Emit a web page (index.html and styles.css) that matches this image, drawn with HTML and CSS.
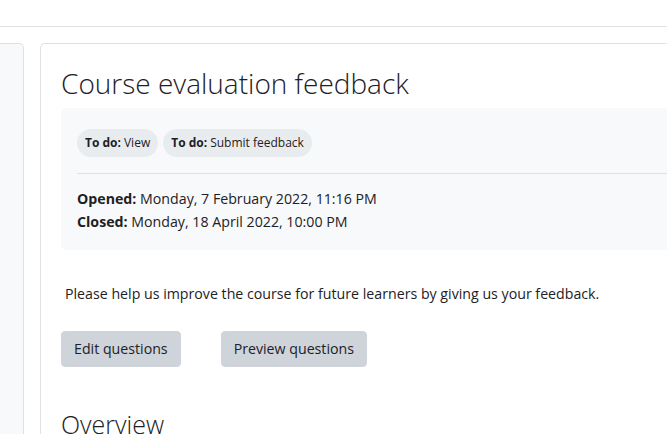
FILE: index.html
```html
<!DOCTYPE html>
<html lang="en">
<head>
<meta charset="utf-8">
<title>Course evaluation feedback</title>
<link rel="stylesheet" href="styles.css">
</head>
<body>
<header class="topbar"></header>
<div class="page">
  <aside class="drawer"></aside>
  <main class="card">
    <h2 class="title">Course evaluation feedback</h2>
    <div class="activity-info">
      <div class="badges">
        <span class="badge"><strong>To do:</strong> View</span>
        <span class="badge"><strong>To do:</strong> Submit feedback</span>
      </div>
      <hr class="divider">
      <div class="dates">
        <div><strong>Opened:</strong> Monday, 7 February 2022, 11:16 PM</div>
        <div><strong>Closed:</strong> Monday, 18 April 2022, 10:00 PM</div>
      </div>
    </div>
    <p class="intro">Please help us improve the course for future learners by giving us your feedback.</p>
    <div class="actions">
      <button class="btn" type="button">Edit questions</button>
      <button class="btn" type="button">Preview questions</button>
    </div>
    <h3 class="subtitle">Overview</h3>
  </main>
</div>
</body>
</html>
```

FILE: styles.css
```css
html, body {
  margin: 0;
  padding: 0;
  background: #fff;
  overflow: hidden;
  height: 434px;
}

body {
  font-family: "Open Sans", "Noto Sans", sans-serif;
  font-size: 14.2px;
  line-height: 22.5px;
  color: #1d2125;
}

.topbar {
  height: 26px;
  border-bottom: 1px solid #dee2e6;
}

.page {
  display: flex;
  gap: 16px;
  padding-top: 16px;
  height: 391px;
  overflow: hidden;
}

.drawer {
  flex: none;
  width: 23px;
  background: #f8f9fa;
  border: 1px solid #dee2e6;
  border-left: none;
  border-bottom: none;
  border-radius: 0 5px 0 0;
}

.card {
  flex: none;
  width: 640px;
  border: 1px solid #dee2e6;
  border-right: none;
  border-bottom: none;
  border-radius: 5px 0 0 0;
  padding: 20px 0 0 20px;
  box-sizing: border-box;
  overflow: hidden;
}

.title {
  margin: 1px 0 7px;
  font-size: 28px;
  font-weight: 300;
  line-height: 36px;
  white-space: nowrap;
}

.activity-info {
  background: #f8f9fa;
  border-radius: 5px 0 0 5px;
  padding: 21px 0 17px 16px;
}

.badges {
  display: flex;
  gap: 5px;
}

.badge {
  display: inline-flex;
  align-items: center;
  height: 28px;
  padding: 0 8px;
  border-radius: 14px;
  background: #e9ecef;
  font-size: 12px;
  line-height: 1;
  color: #1d2125;
}

.badge strong {
  font-weight: 700;
  margin-right: 3px;
}

.divider {
  margin: 16px 0 14px;
  border: none;
  border-top: 1px solid #dee2e6;
}

.dates strong {
  font-weight: 700;
}

.intro {
  margin: 33px 0 25px;
  padding-left: 4px;
  white-space: nowrap;
}

.actions {
  display: flex;
  gap: 40px;
}

.btn {
  font: inherit;
  color: #1d2125;
  background: #ced4da;
  border: 1px solid #ced4da;
  border-radius: 4px;
  padding: 6px 12px;
}

.subtitle {
  margin: 42px 0 0;
  font-size: 25px;
  font-weight: 300;
  line-height: 30px;
}
```
